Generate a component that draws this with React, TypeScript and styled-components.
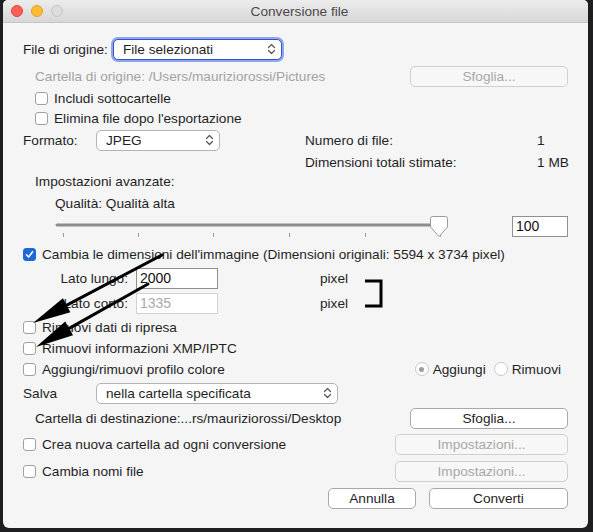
import React from 'react';
import styled, { createGlobalStyle, css } from 'styled-components';

const GlobalStyle = createGlobalStyle`
  html, body { margin: 0; padding: 0; background: #1e1e20; }
  body {
    font-family: "Liberation Sans", Arial, sans-serif;
    font-size: 13.65px;
    color: #1f1f1f;
  }
  * { box-sizing: border-box; }
`;

const Screen = styled.div`
  position: relative;
  width: 593px;
  height: 532px;
  overflow: hidden;
  background: #1e1e20;
  padding-left: 3px;
`;

const Window = styled.div`
  position: relative;
  width: 585px;
  height: 528px;
  display: flex;
  flex-direction: column;
  background: #f5f5f5;
  border-radius: 5px 5px 6px 6px;
  overflow: hidden;
`;

const TitleBar = styled.div`
  flex: none;
  height: 23px;
  display: grid;
  grid-template-columns: 1fr auto 1fr;
  align-items: center;
  padding-left: 8px;
  background: linear-gradient(#ececec, #d7d7d7);
  border-bottom: 1px solid #c4c4c4;
`;

const Lights = styled.div`
  display: flex;
  gap: 8px;
`;

const Light = styled.span<{ $fill: string; $edge: string }>`
  width: 12px;
  height: 12px;
  border-radius: 50%;
  background: ${(p) => p.$fill};
  border: 1px solid ${(p) => p.$edge};
`;

const Title = styled.div`
  color: #4a4a4a;
`;

const Content = styled.div`
  display: flex;
  flex-direction: column;
  padding: 15px 20px 0 20px;
`;

const Row = styled.div<{ $h?: number; $mt?: number; $pl?: number }>`
  display: flex;
  align-items: center;
  height: ${(p) => p.$h ?? 20}px;
  margin-top: ${(p) => p.$mt ?? 0}px;
  padding-left: ${(p) => p.$pl ?? 0}px;
  white-space: nowrap;
`;

const Text = styled.span<{ $muted?: boolean; $w?: number; $right?: boolean; $ml?: number }>`
  color: ${(p) => (p.$muted ? '#a3a3a3' : '#1f1f1f')};
  ${(p) => p.$w && css`width: ${p.$w}px; flex: none;`}
  ${(p) => p.$right && css`text-align: right;`}
  margin-left: ${(p) => p.$ml ?? 0}px;
`;

const PopUp = styled.div<{ $w: number; $focused?: boolean; $ml?: number }>`
  position: relative;
  width: ${(p) => p.$w}px;
  height: 21px;
  margin-left: ${(p) => p.$ml ?? 0}px;
  display: flex;
  align-items: center;
  justify-content: space-between;
  padding: 0 5px 0 9px;
  background: #ffffff;
  border: 1px solid #b3b3b3;
  border-radius: 5px;
  ${(p) =>
    p.$focused &&
    css`
      border-color: #3553c2;
      box-shadow: 0 0 0 2px #8ea6ef;
    `}
`;

const Button = styled.div<{ $w: number; $disabled?: boolean }>`
  width: ${(p) => p.$w}px;
  height: 21px;
  margin-left: auto;
  display: flex;
  align-items: center;
  justify-content: center;
  border-radius: 5px;
  background: ${(p) => (p.$disabled ? '#f7f7f7' : '#ffffff')};
  border: 1px solid ${(p) => (p.$disabled ? '#cfcfcf' : '#a9a9a9')};
  color: ${(p) => (p.$disabled ? '#a8a8a8' : '#1f1f1f')};
`;

const FooterButton = styled(Button)`
  margin-left: 0;
`;

const Footer = styled.div`
  display: flex;
  justify-content: flex-end;
  gap: 13px;
  margin-top: 5px;
  height: 22px;
  align-items: center;
`;

const Box = styled.span<{ $checked?: boolean }>`
  flex: none;
  width: 13px;
  height: 13px;
  margin-right: 6px;
  border-radius: 3px;
  display: flex;
  align-items: center;
  justify-content: center;
  background: ${(p) => (p.$checked ? '#1f68d8' : '#ffffff')};
  border: 1px solid ${(p) => (p.$checked ? '#1f68d8' : '#a0a0a0')};
`;

const RadioDot = styled.span<{ $on?: boolean }>`
  flex: none;
  width: 14px;
  height: 14px;
  margin: 0 4px 0 0;
  border-radius: 50%;
  background: #ffffff;
  border: 1px solid #c9c9c9;
  display: flex;
  align-items: center;
  justify-content: center;
  &::after {
    content: '';
    width: 5px;
    height: 5px;
    border-radius: 50%;
    background: ${(p) => (p.$on ? '#9d9d9d' : 'transparent')};
  }
`;

const RadioGroup = styled.div`
  display: flex;
  align-items: center;
  margin-left: auto;
  margin-right: 7px;
  gap: 8px;
`;

const RadioItem = styled.label`
  display: flex;
  align-items: center;
  color: #1f1f1f;
`;

const Field = styled.div<{ $w: number; $disabled?: boolean; $ml?: number }>`
  width: ${(p) => p.$w}px;
  height: 21px;
  margin-left: ${(p) => p.$ml ?? 0}px;
  display: flex;
  align-items: center;
  padding-left: 3px;
  background: #ffffff;
  border: 1px solid ${(p) => (p.$disabled ? '#d2d2d2' : '#8f8f8f')};
  color: ${(p) => (p.$disabled ? '#a9a9a9' : '#111111')};
  font-size: 14px;
`;

const SliderSvg = styled.svg`
  flex: none;
  display: block;
`;

const Overlay = styled.svg`
  position: absolute;
  left: 0;
  top: 0;
  pointer-events: none;
`;

const Chevrons = () => (
  <svg width="9" height="12" viewBox="0 0 9 12">
    <path d="M1.5 4.5 L4.5 1.5 L7.5 4.5 M1.5 7.5 L4.5 10.5 L7.5 7.5" fill="none" stroke="#555" strokeWidth="1.2" strokeLinecap="round" strokeLinejoin="round" />
  </svg>
);

const Check = ({ checked }: { checked?: boolean }) => (
  <Box $checked={checked}>
    {checked && (
      <svg width="9" height="9" viewBox="0 0 9 9">
        <path d="M1.5 4.8 L3.6 7 L7.6 1.8" fill="none" stroke="#fff" strokeWidth="1.6" strokeLinecap="round" strokeLinejoin="round" />
      </svg>
    )}
  </Box>
);

const Slider = () => {
  const ticks = [8, 83, 158, 234, 310, 385];
  return (
    <SliderSvg width="396" height="26" viewBox="0 0 396 26">
      <line x1="2" y1="12" x2="388" y2="12" stroke="#8d8d8d" strokeWidth="3" strokeLinecap="round" />
      {ticks.map((x) => (
        <line key={x} x1={x + 0.5} y1="20" x2={x + 0.5} y2="24" stroke="#9a9a9a" strokeWidth="1" />
      ))}
      <path d="M377.5 3.5 h13 a2 2 0 0 1 2 2 v8.5 l-8.5 9.5 l-8.5 -9.5 v-8.5 a2 2 0 0 1 2 -2 z" fill="#ffffff" stroke="#9a9a9a" strokeWidth="1" />
    </SliderSvg>
  );
};

const Arrow = ({ x1, y1, x2, y2 }: { x1: number; y1: number; x2: number; y2: number }) => {
  const dx = x2 - x1;
  const dy = y2 - y1;
  const len = Math.hypot(dx, dy);
  const ux = dx / len;
  const uy = dy / len;
  const head = 38;
  const half = 8;
  const bx = x2 - ux * head;
  const by = y2 - uy * head;
  const nx = -uy;
  const ny = ux;
  return (
    <g>
      <line x1={x1} y1={y1} x2={bx + ux * 4} y2={by + uy * 4} stroke="#000" strokeWidth="3" strokeLinecap="round" />
      <polygon points={`${x2},${y2} ${bx + nx * half},${by + ny * half} ${bx - nx * half},${by - ny * half}`} fill="#000" />
    </g>
  );
};

export default function App() {
  return (
    <Screen>
      <GlobalStyle />
      <Window>
        <TitleBar>
          <Lights>
            <Light $fill="#fd5f57" $edge="#e0443e" />
            <Light $fill="#febc2e" $edge="#dea123" />
            <Light $fill="#dcdcdc" $edge="#c4c4c4" />
          </Lights>
          <Title>Conversione file</Title>
          <span />
        </TitleBar>

        <Content>
          <Row $h={22}>
            <Text>File di origine:</Text>
            <PopUp $w={169} $focused $ml={5}>
              <span>File selezionati</span>
              <Chevrons />
            </PopUp>
          </Row>
          <Row $h={22} $mt={5} $pl={12}>
            <Text $muted>Cartella di origine: /Users/mauriziorossi/Pictures</Text>
            <Button $w={158} $disabled>Sfoglia...</Button>
          </Row>
          <Row $pl={12} $mt={1}>
            <Check />
            <Text>Includi sottocartelle</Text>
          </Row>
          <Row $pl={12}>
            <Check />
            <Text>Elimina file dopo l'esportazione</Text>
          </Row>
          <Row $h={22} $mt={1}>
            <Text $w={73}>Formato:</Text>
            <PopUp $w={124}>
              <span>JPEG</span>
              <Chevrons />
            </PopUp>
            <Text $w={232} $ml={85}>Numero di file:</Text>
            <Text>1</Text>
          </Row>
          <Row $mt={1}>
            <Text $w={232} $ml={282}>Dimensioni totali stimate:</Text>
            <Text>1 MB</Text>
          </Row>
          <Row $h={18} $pl={12}>
            <Text>Impostazioni avanzate:</Text>
          </Row>
          <Row $mt={3} $pl={32}>
            <Text>Qualità: Qualità alta</Text>
          </Row>
          <Row $h={26} $pl={32}>
            <Slider />
            <Field $w={56} $ml={61}>100</Field>
          </Row>
          <Row $mt={5}>
            <Check checked />
            <Text>Cambia le dimensioni dell'immagine (Dimensioni originali: 5594 x 3734 pixel)</Text>
          </Row>
          <Row $h={22} $mt={3}>
            <Text $w={105} $right>Lato lungo:</Text>
            <Field $w={82} $ml={8}>2000</Field>
            <Text $ml={102}>pixel</Text>
          </Row>
          <Row $h={22} $mt={3}>
            <Text $w={105} $right>Lato corto:</Text>
            <Field $w={82} $ml={8} $disabled>1335</Field>
            <Text $ml={102}>pixel</Text>
          </Row>
          <Row $mt={3}>
            <Check />
            <Text>Rimuovi dati di ripresa</Text>
          </Row>
          <Row $mt={1}>
            <Check />
            <Text>Rimuovi informazioni XMP/IPTC</Text>
          </Row>
          <Row $mt={1}>
            <Check />
            <Text>Aggiungi/rimuovi profilo colore</Text>
            <RadioGroup>
              <RadioItem>
                <RadioDot $on />
                Aggiungi
              </RadioItem>
              <RadioItem>
                <RadioDot />
                Rimuovi
              </RadioItem>
            </RadioGroup>
          </Row>
          <Row $h={22} $mt={3}>
            <Text $w={73}>Salva</Text>
            <PopUp $w={242}>
              <span>nella cartella specificata</span>
              <Chevrons />
            </PopUp>
          </Row>
          <Row $h={22} $mt={3} $pl={12}>
            <Text>Cartella di destinazione:...rs/mauriziorossi/Desktop</Text>
            <Button $w={158}>Sfoglia...</Button>
          </Row>
          <Row $h={22} $mt={4}>
            <Check />
            <Text>Crea nuova cartella ad ogni conversione</Text>
            <Button $w={173} $disabled>Impostazioni...</Button>
          </Row>
          <Row $h={22} $mt={5}>
            <Check />
            <Text>Cambia nomi file</Text>
            <Button $w={173} $disabled>Impostazioni...</Button>
          </Row>
          <Footer>
            <FooterButton $w={88}>Annulla</FooterButton>
            <FooterButton $w={139}>Converti</FooterButton>
          </Footer>
        </Content>

        <Overlay width="585" height="528" viewBox="0 0 585 528">
          <Arrow x1={159} y1={255} x2={30} y2={323} />
          <Arrow x1={145} y1={284} x2={33} y2={347} />
          <path d="M362 281 H378 V306 H362" fill="none" stroke="#000" strokeWidth="3" />
        </Overlay>
      </Window>
    </Screen>
  );
}
